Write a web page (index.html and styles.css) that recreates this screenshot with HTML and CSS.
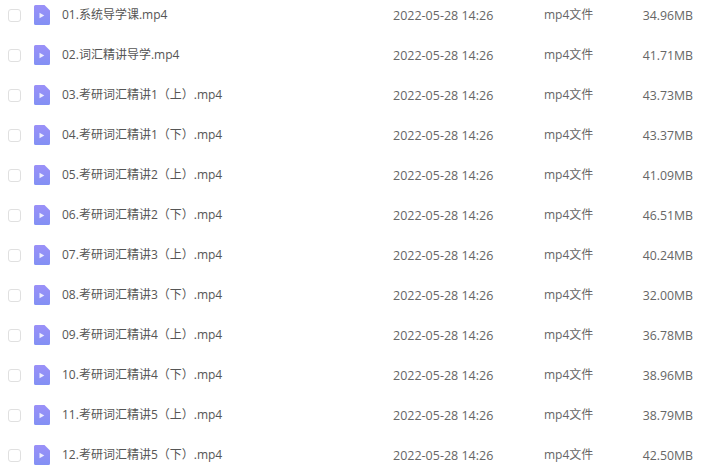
FILE: index.html
```html
<!DOCTYPE html>
<html lang="zh-CN">
<head>
  <meta charset="UTF-8">
  <title>文件列表</title>
  <link rel="stylesheet" href="styles.css">
</head>
<body>
  <svg class="defs" width="0" height="0">
    <defs>
      <linearGradient id="fileFill" x1="0" y1="0" x2="0" y2="1">
        <stop offset="0" stop-color="#9a90f8"/>
        <stop offset="1" stop-color="#8390f4"/>
      </linearGradient>
      <symbol id="fileIcon" viewBox="0 0 16 20">
        <path d="M1.5 0H10.500L16 5.500V18.500A1.500 1.500 0 0 1 14.500 20H1.500A1.500 1.500 0 0 1 0 18.500V1.500A1.500 1.500 0 0 1 1.500 0Z" fill="url(#fileFill)"/>
        <path d="M5.500 7.800L10.300 10.500L5.500 13.200Z" fill="#eeeefe"/>
      </symbol>
    </defs>
  </svg>
  <ul class="file-list" id="list"></ul>
  <script>
    const files = [
      ['01.系统导学课.mp4', '34.96MB'],
      ['02.词汇精讲导学.mp4', '41.71MB'],
      ['03.考研词汇精讲1（上）.mp4', '43.73MB'],
      ['04.考研词汇精讲1（下）.mp4', '43.37MB'],
      ['05.考研词汇精讲2（上）.mp4', '41.09MB'],
      ['06.考研词汇精讲2（下）.mp4', '46.51MB'],
      ['07.考研词汇精讲3（上）.mp4', '40.24MB'],
      ['08.考研词汇精讲3（下）.mp4', '32.00MB'],
      ['09.考研词汇精讲4（上）.mp4', '36.78MB'],
      ['10.考研词汇精讲4（下）.mp4', '38.96MB'],
      ['11.考研词汇精讲5（上）.mp4', '38.79MB'],
      ['12.考研词汇精讲5（下）.mp4', '42.50MB']
    ];
    document.getElementById('list').innerHTML = files.map(f => `
      <li class="file-row">
        <span class="check"></span>
        <svg class="file-icon"><use href="#fileIcon"/></svg>
        <span class="name">${f[0]}</span>
        <span class="date">2022-05-28 14:26</span>
        <span class="type">mp4文件</span>
        <span class="size">${f[1]}</span>
      </li>`).join('');
  </script>
</body>
</html>
```

FILE: styles.css
```css
* {
  box-sizing: border-box;
}
html, body {
  height: 100%;
}
body {
  margin: 0;
  background: #fff;
  overflow: hidden;
  font-family: "Open Sans", "Noto Sans CJK SC", sans-serif;
  font-size: 12px;
  color: #666;
}
.defs {
  display: block;
  height: 0;
}
.file-list {
  list-style: none;
  margin: -5px 0 0;
  padding: 0;
}
.file-row {
  display: grid;
  grid-template-columns: 26px 28px 331px 151px 90px 59px;
  align-items: center;
  height: 40px;
  padding-left: 8px;
}
.check {
  width: 13px;
  height: 13px;
  border: 1px solid #e0e0e0;
  border-radius: 3px;
}
.file-icon {
  display: block;
  width: 16px;
  height: 20px;
  margin-top: -1px;
}
.name {
  color: #555;
  position: relative;
  top: -1px;
}
.date {
  font-size: 12.5px;
}
.type {
  position: relative;
  top: -1px;
}
.size {
  font-size: 12.3px;
  text-align: right;
}
```
